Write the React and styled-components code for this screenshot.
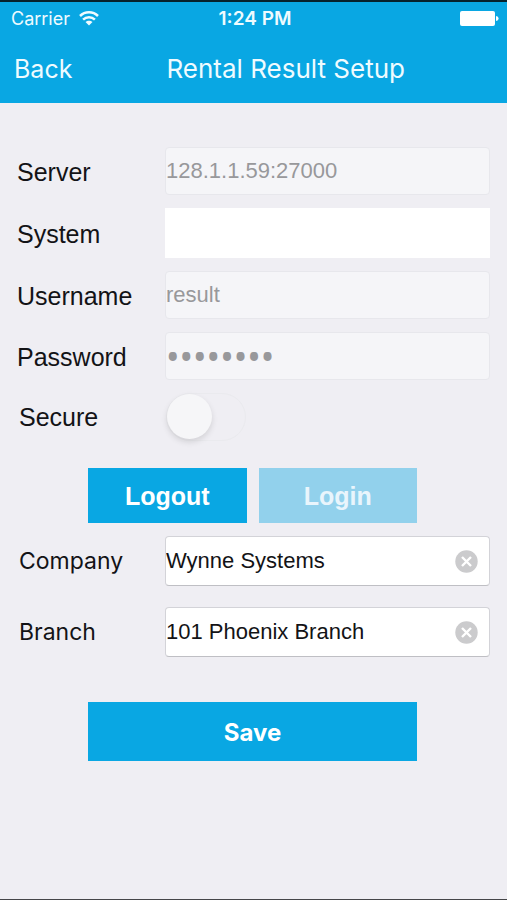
import React, { useState } from 'react';
import styled, { createGlobalStyle } from 'styled-components';

const blue = '#09a7e3';
const helvetica = "'Liberation Sans', Arial, sans-serif";
const system = "Inter, 'Liberation Sans', sans-serif";

// --- Styled Components ---

const GlobalStyle = createGlobalStyle`
  * {
    box-sizing: border-box;
  }

  body {
    margin: 0;
    background: #efeef3;
  }

  button, input {
    margin: 0;
    padding: 0;
    border: 0;
    font: inherit;
  }
`;

const Screen = styled.div`
  display: flex;
  flex-direction: column;
  min-height: 100vh;
  border-top: 2px solid #06222d;
  border-bottom: 1px solid #454548;
  background: #efeef3;
  color: #131316;
  font-family: ${helvetica};
`;

const Header = styled.header`
  background: ${blue};
  color: #effbff;
  font-family: ${system};
`;

const StatusBar = styled.div`
  display: grid;
  grid-template-columns: 1fr auto 1fr;
  align-items: center;
  height: 32px;
  padding: 0 8px 0 11px;
  font-size: 18px;
`;

const Carrier = styled.div`
  display: flex;
  align-items: center;
  gap: 9px;
`;

const Clock = styled.time`
  font-size: 19px;
  font-weight: 600;
`;

const Battery = styled.svg`
  justify-self: end;
`;

const NavBar = styled.nav`
  display: flex;
  align-items: center;
  height: 69px;
  padding: 0 8px 0 14px;
  font-size: 25px;
`;

const BackLink = styled.a`
  color: inherit;
  text-decoration: none;
`;

const Title = styled.h1`
  flex: 1;
  margin: 0;
  font-size: 26px;
  font-weight: 400;
  text-align: center;
`;

const Form = styled.form`
  padding: 44px 17px 0;
`;

const Group = styled.div`
  display: grid;
  grid-template-columns: minmax(0, 1fr);
  gap: ${({ $gap }) => $gap}px;
`;

const Row = styled.div`
  display: grid;
  grid-template-columns: 148px minmax(0, 1fr);
  align-items: center;
`;

const Label = styled.label`
  padding: ${({ $inset }) => ($inset ? '0 0 0 2px' : '2px 0 0')};
  font-family: ${({ $system }) => ($system ? system : helvetica)};
  font-size: ${({ $system }) => ($system ? 23 : 25)}px;
  line-height: 30px;
`;

const Field = styled.div`
  display: flex;
  align-items: center;
  height: ${({ $plain }) => ($plain ? 50 : 48)}px;
  border: ${({ $plain }) => ($plain ? '0' : '1px solid #e7e7ec')};
  border-radius: ${({ $plain }) => ($plain ? 0 : 4)}px;
  background: ${({ $disabled }) => ($disabled ? '#f5f5f8' : '#fff')};
`;

const PickerField = styled(Field)`
  height: 50px;
  padding-right: 11px;
  border-color: #d3d3d8;
  border-bottom-color: #bfbfc4;
`;

const Input = styled.input`
  flex: 1;
  min-width: 0;
  height: 100%;
  background: transparent;
  color: inherit;
  font-size: 22px;
  outline: none;

  &:disabled {
    color: #98989b;
  }

  /* a larger size gives the masked characters their big dots */
  &[type='password'] {
    font-family: 'Noto Sans', sans-serif;
    font-size: 36px;
  }
`;

const ClearButton = styled.button`
  display: flex;
  background: none;
  cursor: pointer;
`;

const Switch = styled.input`
  appearance: none;
  width: 80px;
  height: 48px;
  margin-left: 1px;
  border: 1px solid #eaeaee;
  border-radius: 24px;

  &::before {
    content: '';
    display: block;
    width: 45px;
    height: 45px;
    border-radius: 50%;
    background: #f6f6f8;
    box-shadow: 0 3px 6px rgba(0, 0, 0, 0.12);
  }

  &:checked::before {
    margin-left: auto;
  }
`;

const Actions = styled.div`
  display: grid;
  grid-template-columns: 1fr 1fr;
  gap: 12px;
  margin: 27px 73px 13px 71px;
`;

const Button = styled.button`
  height: 55px;
  padding-top: 2px;
  background: ${blue};
  color: #fff;
  font-size: 25px;
  font-weight: 700;

  &:disabled {
    background: #92d1ec;
    color: #e9f5fc;
  }
`;

const SaveButton = styled(Button)`
  grid-column: 1 / -1;
  height: 59px;
  font-family: ${system};
  font-size: 24px;
`;

const SaveActions = styled(Actions)`
  margin-top: 45px;
`;

// --- Icons ---

const WifiIcon = () => (
  <svg width="20" height="15" viewBox="0 0 20 15" fill="none" stroke="currentColor" strokeWidth="2.5" aria-hidden="true">
    <path d="M1 5 C6 0 14 0 19 5" />
    <path d="M4.1 8.6 C7.4 5.4 12.6 5.4 15.9 8.6" />
    <path d="M10 14.6 L6.5 11.1 C8.5 9.2 11.5 9.2 13.5 11.1 Z" fill="currentColor" stroke="none" />
  </svg>
);

const BatteryIcon = () => (
  <Battery width="39" height="15" viewBox="0 0 39 15" fill="#fff" aria-hidden="true">
    <rect width="35" height="15" rx="2" />
    <path d="M36 5 Q38.6 5.4 38.6 7.5 Q38.6 9.6 36 10 Z" />
  </Battery>
);

const ClearIcon = () => (
  <svg width="23" height="23" viewBox="0 0 23 23" aria-hidden="true">
    <circle cx="11.5" cy="11.5" r="11.2" fill="#cbcbcd" />
    <path d="M7 7 L16 16 M16 7 L7 16" stroke="#fff" strokeWidth="2.4" />
  </svg>
);

// --- Components ---

const Picker = ({ id, label, value, onChange }) => (
  <Row>
    <Label htmlFor={id} $inset $system>{label}</Label>
    <PickerField>
      <Input id={id} type="text" value={value} onChange={(e) => onChange(e.target.value)} />
      <ClearButton type="button" aria-label={`Clear ${label}`} onClick={() => onChange('')}>
        <ClearIcon />
      </ClearButton>
    </PickerField>
  </Row>
);

const App = () => {
  const [systemName, setSystemName] = useState('');
  const [company, setCompany] = useState('Wynne Systems');
  const [branch, setBranch] = useState('101 Phoenix Branch');

  return (
    <Screen>
      <GlobalStyle />
      <Header>
        <StatusBar>
          <Carrier>
            Carrier
            <WifiIcon />
          </Carrier>
          <Clock>1:24 PM</Clock>
          <BatteryIcon />
        </StatusBar>
        <NavBar>
          <BackLink href="#">Back</BackLink>
          <Title>Rental Result Setup</Title>
        </NavBar>
      </Header>

      <Form onSubmit={(e) => e.preventDefault()}>
        <Group $gap={13}>
          <Row>
            <Label htmlFor="server">Server</Label>
            <Field $disabled>
              <Input id="server" type="text" defaultValue="128.1.1.59:27000" disabled />
            </Field>
          </Row>
          <Row>
            <Label htmlFor="system">System</Label>
            <Field $plain>
              <Input id="system" type="text" value={systemName} onChange={(e) => setSystemName(e.target.value)} />
            </Field>
          </Row>
          <Row>
            <Label htmlFor="username">Username</Label>
            <Field $disabled>
              <Input id="username" type="text" defaultValue="result" disabled />
            </Field>
          </Row>
          <Row>
            <Label htmlFor="password">Password</Label>
            <Field $disabled>
              <Input id="password" type="password" defaultValue="password" disabled />
            </Field>
          </Row>
          <Row>
            <Label htmlFor="secure" $inset>Secure</Label>
            <Switch id="secure" type="checkbox" role="switch" disabled />
          </Row>
        </Group>

        <Actions>
          <Button type="button">Logout</Button>
          <Button type="button" disabled>Login</Button>
        </Actions>

        <Group $gap={21}>
          <Picker id="company" label="Company" value={company} onChange={setCompany} />
          <Picker id="branch" label="Branch" value={branch} onChange={setBranch} />
        </Group>

        <SaveActions>
          <SaveButton type="submit">Save</SaveButton>
        </SaveActions>
      </Form>
    </Screen>
  );
};

export default App;
